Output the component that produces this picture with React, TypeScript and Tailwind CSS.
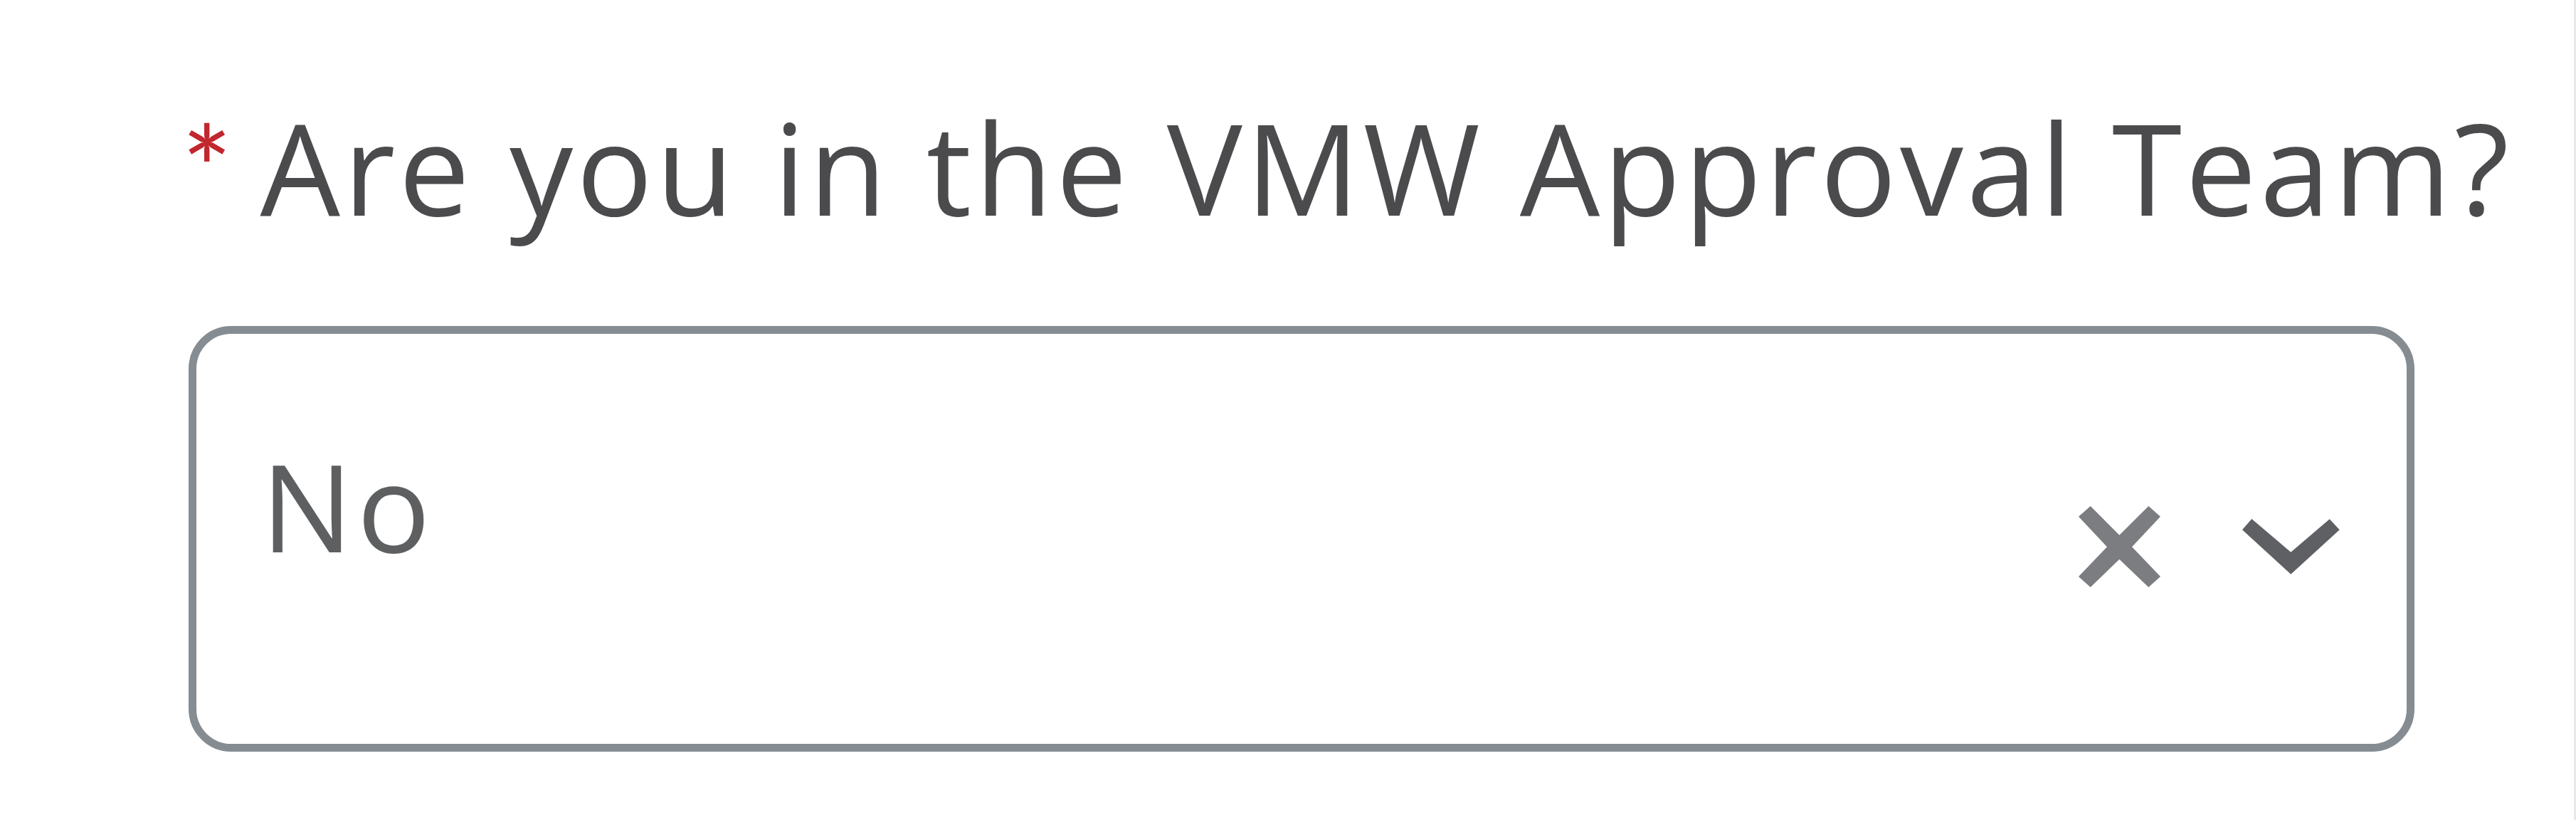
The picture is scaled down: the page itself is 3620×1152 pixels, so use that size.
import React from "react";

function ClearIcon() {
  return (
    <svg width="115" height="114" viewBox="0 0 115 114" className="shrink-0">
      <polygon
        fill="#7b7d80"
        points="16.7,0 57.3,40.7 98.3,0 115,14.7 75,57.3 115,99 98.3,114 57.3,74.7 16.7,114 0,99 40,57.3 0,14.7"
      />
    </svg>
  );
}

function ChevronIcon() {
  return (
    <svg width="137" height="78" viewBox="0 0 137 78" className="shrink-0">
      <polygon
        fill="#5e6064"
        points="13.3,0 68.3,46.7 122.7,0.3 136.7,15.3 68.3,77.7 0,15.3"
      />
    </svg>
  );
}

export default function App() {
  return (
    <div className="w-[3620px] h-[1152px] bg-white border-r-[3px] border-[#e8e8e8] font-['Open_Sans','Liberation_Sans',sans-serif] overflow-hidden">
      {/* Question label */}
      <div className="flex items-start pl-[255px] pt-[145px]">
        <span className="font-['Lato',sans-serif] text-[#c1272d] text-[168px] leading-none mt-[6px] mr-[39px]">*</span>
        <span className="text-[#4b4b4d] text-[178px] leading-none tracking-[4.8px] whitespace-nowrap">
          Are you in the VMW Approval Team?
        </span>
      </div>

      {/* Select box */}
      <div className="ml-[265px] mt-[135px] w-[3128px] h-[598px] border-[11px] border-[#858c92] rounded-[60px] flex items-start">
        <div className="flex-1 pl-[91px] pt-[155px] text-[#5d5f61] text-[171px] leading-none tracking-[6px]">
          No
        </div>
        <div className="self-center mt-[22px] flex items-center gap-[115px] pr-[94px]">
          <ClearIcon />
          <ChevronIcon />
        </div>
      </div>
    </div>
  );
}
